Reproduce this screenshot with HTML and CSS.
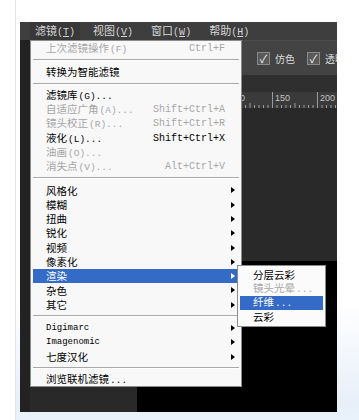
FILE: index.html
```html
<!DOCTYPE html>
<html lang="zh-CN">
<head>
    <meta charset="UTF-8">
    <meta name="viewport" content="width=device-width, initial-scale=1.0">
    <title>滤镜菜单</title>
    <link rel="stylesheet" href="styles.css">
</head>
<body>
    <div class="page">
        <div class="ps">
            <div class="menubar">
                <span class="mb-item active">滤镜<span class="key">(<u>T</u>)</span></span>
                <span class="mb-item">视图<span class="key">(<u>V</u>)</span></span>
                <span class="mb-item">窗口<span class="key">(<u>W</u>)</span></span>
                <span class="mb-item">帮助<span class="key">(<u>H</u>)</span></span>
            </div>
            <div class="main">
                <div class="toolstrip"></div>
                <div class="work">
                    <div class="options">
                        <span class="check">✓</span><span class="opt-label">仿色</span>
                        <span class="check">✓</span><span class="opt-label">透明区域</span>
                    </div>
                    <div class="tabs"></div>
                    <div class="ruler">
                        <svg width="307" height="16" viewBox="0 0 307 16">
                            <g stroke="#9a9a9a" stroke-width="1">
                                <path d="M197.5 16v-16M242.5 16v-16M287.5 16v-16"/>
                                <path d="M202 16v-3M206.5 16v-3M211 16v-3M215.5 16v-3M220 16v-5M224.5 16v-3M229 16v-3M233.5 16v-3M238 16v-3"/>
                                <path d="M247 16v-3M251.5 16v-3M256 16v-3M260.5 16v-3M265 16v-5M269.5 16v-3M274 16v-3M278.5 16v-3M283 16v-3"/>
                                <path d="M292 16v-3M296.5 16v-3M301 16v-3M305.5 16v-3"/>
                            </g>
                            <g fill="#c4c4c4" font-family="Liberation Sans, sans-serif" font-size="9">
                                <text x="200" y="9">100</text>
                                <text x="245" y="9">150</text>
                                <text x="290" y="9">200</text>
                            </g>
                        </svg>
                    </div>
                    <div class="canvas">
                        <div class="canvas-top"></div>
                        <div class="canvas-bottom">
                            <div class="canvas-left"></div>
                            <div class="pasteboard"></div>
                        </div>
                    </div>
                </div>
            </div>

            <div class="dropdown">
                <div class="item off"><span>上次滤镜操作<span class="key">(F)</span></span><span class="sc">Ctrl+F</span></div>
                <div class="sep"></div>
                <div class="item"><span>转换为智能滤镜</span></div>
                <div class="sep"></div>
                <div class="item"><span>滤镜库<span class="key">(G)...</span></span></div>
                <div class="item off"><span>自适应广角<span class="key">(A)...</span></span><span class="sc">Shift+Ctrl+A</span></div>
                <div class="item off"><span>镜头校正<span class="key">(R)...</span></span><span class="sc">Shift+Ctrl+R</span></div>
                <div class="item"><span>液化<span class="key">(L)...</span></span><span class="sc">Shift+Ctrl+X</span></div>
                <div class="item off"><span>油画<span class="key">(O)...</span></span></div>
                <div class="item off"><span>消失点<span class="key">(V)...</span></span><span class="sc">Alt+Ctrl+V</span></div>
                <div class="sep"></div>
                <div class="item sub"><span>风格化</span></div>
                <div class="item sub"><span>模糊</span></div>
                <div class="item sub"><span>扭曲</span></div>
                <div class="item sub"><span>锐化</span></div>
                <div class="item sub"><span>视频</span></div>
                <div class="item sub"><span>像素化</span></div>
                <div class="item sub hot"><span>渲染</span></div>
                <div class="item sub"><span>杂色</span></div>
                <div class="item sub"><span>其它</span></div>
                <div class="sep"></div>
                <div class="item sub"><span class="latin">Digimarc</span></div>
                <div class="item sub"><span class="latin">Imagenomic</span></div>
                <div class="item sub"><span>七度汉化</span></div>
                <div class="sep"></div>
                <div class="item"><span>浏览联机滤镜<span class="key">...</span></span></div>
            </div>

            <div class="submenu">
                <div class="item"><span>分层云彩</span></div>
                <div class="item off"><span>镜头光晕<span class="key">...</span></span></div>
                <div class="item hot"><span>纤维<span class="key">...</span></span></div>
                <div class="item"><span>云彩</span></div>
            </div>
        </div>
    </div>
</body>
</html>
```

FILE: styles.css
```css
body {
    margin: 0;
    width: 359px;
    height: 420px;
    overflow: hidden;
    background: #fff;
    font-family: "Noto Sans CJK SC", "Noto Sans", sans-serif;
}
.page {
    margin-left: 15px;
    height: 420px;
    box-sizing: border-box;
    padding: 22px 0 0 4px;
    border-left: 1px solid #dfe4ea;
    background: linear-gradient(to bottom, #fff 0, #fff 72%, #e7eff9 96%, #e9f1fb 100%);
}
.ps {
    position: relative;
    width: 317px;
    height: 390px;
    display: flex;
    flex-direction: column;
    background: #000;
    overflow: hidden;
}

/* menu bar */
.menubar {
    height: 18px;
    flex: none;
    display: flex;
    align-items: center;
    padding-left: 10px;
    background: #3e3e3e;
    color: #d6d6d6;
    font-size: 11px;
    line-height: 18px;
}
.mb-item {
    padding: 0 5px;
    margin-right: 8px;
    white-space: nowrap;
}
.mb-item .key {
    font-family: "Liberation Mono", monospace;
    font-size: 10px;
}
.mb-item.active {
    background: #383838;
}

/* workspace */
.main {
    flex: 1;
    display: flex;
    min-height: 0;
    min-width: 0;
    overflow: hidden;
}
.toolstrip {
    width: 10px;
    flex: none;
    background: #222;
}
.work {
    width: 307px;
    flex: none;
    display: flex;
    flex-direction: column;
    overflow: hidden;
}
.options {
    height: 35px;
    flex: none;
    display: flex;
    align-items: center;
    padding-left: 227px;
    background: #434343;
    border-top: 1px solid #4c4c4c;
    box-sizing: border-box;
    color: #dcdcdc;
    font-size: 10px;
    white-space: nowrap;
    overflow: hidden;
}
.check {
    width: 11px;
    height: 11px;
    flex: none;
    border: 1px solid #8a8a8a;
    background: #5a5a5a;
    color: #f0f0f0;
    font-size: 11px;
    line-height: 11px;
    text-align: center;
    margin-right: 5px;
}
.opt-label {
    margin-right: 12px;
}
.tabs {
    height: 17px;
    flex: none;
    background: #2f2f2f;
}
.ruler {
    height: 16px;
    flex: none;
    background: #3a3a3a;
    border-bottom: 1px solid #2a2a2a;
}
.ruler svg {
    display: block;
}
.canvas {
    flex: 1;
    display: flex;
    flex-direction: column;
}
.canvas-top {
    height: 152px;
    flex: none;
    background: #292929;
}
.canvas-bottom {
    flex: 1;
    display: flex;
}
.canvas-left {
    width: 107px;
    flex: none;
    background: #292929;
}
.pasteboard {
    flex: 1;
    background: #000;
}

/* filter menu */
.dropdown, .submenu {
    position: absolute;
    background: #f8f8f8;
    border: 1px solid #8c8c8c;
    box-sizing: border-box;
    font-size: 10.5px;
    color: #000;
}
.dropdown {
    left: 10px;
    top: 18px;
    width: 212px;
    height: 347px;
    padding: 1px 2px 0;
}
.item {
    height: 14.3px;
    display: flex;
    align-items: center;
    justify-content: space-between;
    padding: 0 14px 0 13px;
    white-space: nowrap;
    line-height: 14px;
}
.item .key {
    font-family: "Liberation Mono", monospace;
    font-size: 9.5px;
    margin-left: 1px;
}
.item .sc {
    font-family: "Liberation Mono", monospace;
    font-size: 10px;
}
.item .latin {
    font-family: "Liberation Mono", monospace;
    font-size: 9px;
}
.item.off {
    color: #a6a6a6;
}
.item.sub {
    position: relative;
}
.item.sub::after {
    content: "";
    position: absolute;
    right: 4px;
    top: 4px;
    border-left: 4px solid #000;
    border-top: 3.5px solid transparent;
    border-bottom: 3.5px solid transparent;
}
.item.hot {
    background: #336bc6;
    color: #fff;
}
.item.sub.hot::after {
    border-left-color: #fff;
}
.sep {
    height: 9px;
    box-sizing: border-box;
    padding-top: 3px;
}
.sep::before {
    content: "";
    display: block;
    height: 1px;
    background: #a8a8a8;
    border-bottom: 1px solid #fff;
}

.submenu {
    left: 217px;
    top: 243px;
    width: 89px;
    height: 62px;
    padding: 2px 2px 0 2px;
    background: #fbfbfb;
}
.submenu .item {
    height: 14px;
    padding-left: 13px;
}
```
